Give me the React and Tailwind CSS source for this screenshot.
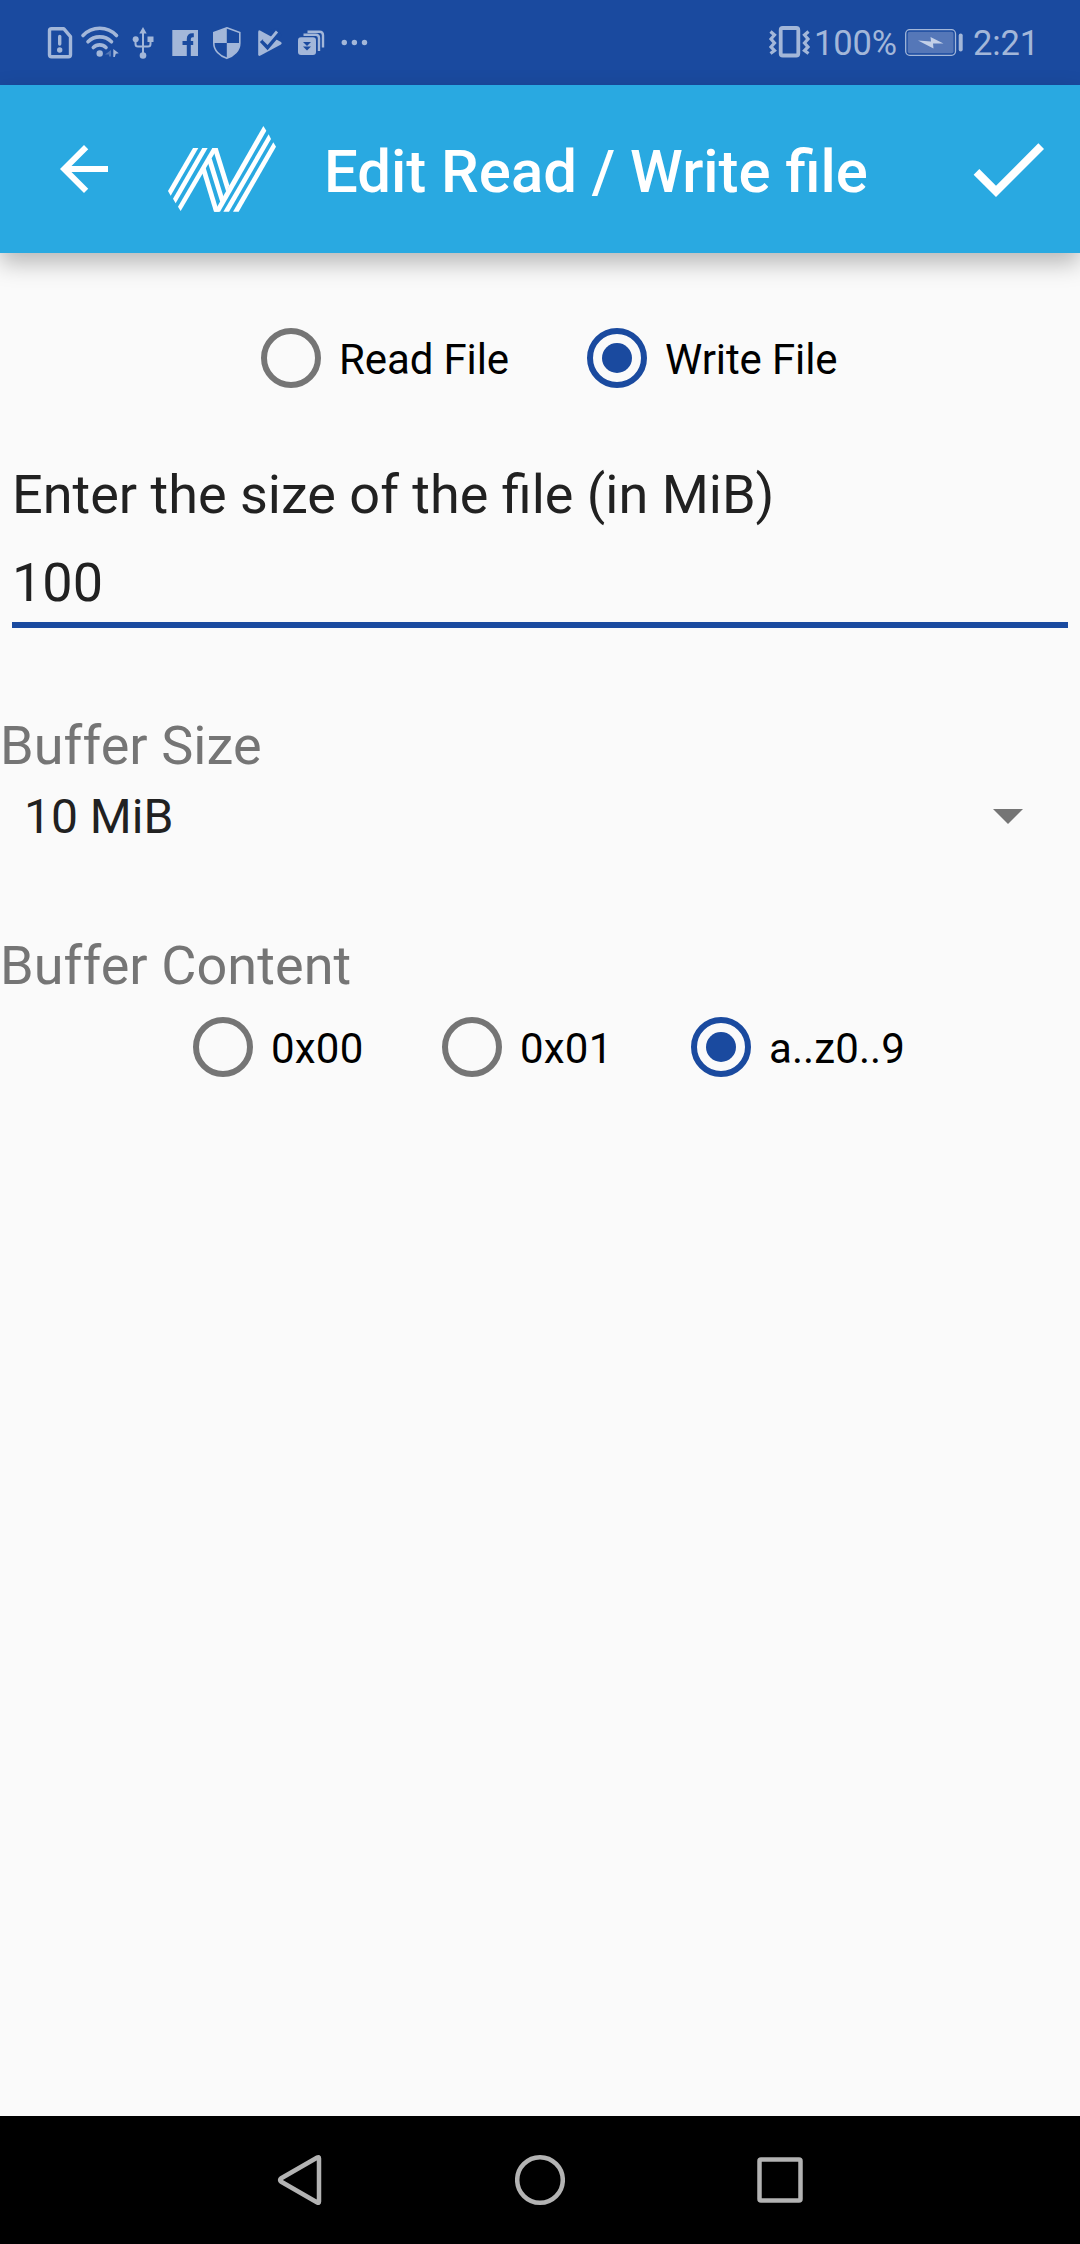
import React from 'react';

function Icon({ box, className = '', children }) {
  const [, , w, h] = box;
  return (
    <svg width={w} height={h} viewBox={box.join(' ')} className={'block shrink-0 ' + className} fill="none">
      {children}
    </svg>
  );
}

function StatusBar() {
  return (
    <div className="flex h-[85px] shrink-0 items-start justify-between bg-[#1a4a9f] pr-[43px] pl-[46px] text-[#a3b7d9]">
      <div className="flex pt-[24px]">
        <Icon box={[46, 24, 28, 38]}>
          <path d="M51.5 28.7h12.2l6.8 8v18q0 2-2 2H51.5q-2 0-2-2V30.7q0-2 2-2z" stroke="currentColor" strokeWidth="3.4" strokeLinejoin="round" />
          <path d="M59.7 36.5v7.500" stroke="currentColor" strokeWidth="3.400" strokeLinecap="round" />
          <circle cx="59.700" cy="50" r="2.700" fill="currentColor" />
        </Icon>
        <Icon box={[80, 24, 40, 38]} className="ml-[6px]">
          <path d="M83 35.500a23 23 0 0 1 33.500 0M88 41.800a16.500 16.500 0 0 1 23.500 0M93.300 47.500a9 9 0 0 1 12.700 0" stroke="currentColor" strokeWidth="3.600" strokeLinecap="round" />
          <circle cx="99.700" cy="53.500" r="3.200" fill="currentColor" />
          <path d="M111 50v6.500h-2v-2h-4z" fill="currentColor" opacity=".4" />
          <path d="M113.300 49l5.500 4.200-3 .6-1 3.200h-1.500z" fill="currentColor" />
        </Icon>
        <Icon box={[130, 24, 27, 38]} className="ml-[10px]">
          <path d="M143 31v25M135.500 39v5q0 2.500 2.500 2.500h10q2.500 0 2.500-2.500v-5" stroke="currentColor" strokeWidth="2" />
          <path d="M143 27l3.700 6.500h-7.400z" fill="currentColor" />
          <circle cx="135.700" cy="39.300" r="3" fill="currentColor" />
          <path d="M147.500 36.500h6v5.500h-6z" fill="currentColor" />
          <circle cx="143" cy="55.500" r="3.300" fill="currentColor" />
        </Icon>
        <Icon box={[170, 24, 30, 38]} className="ml-[13px]">
          <rect x="172.300" y="30" width="25.700" height="26" fill="currentColor" />
          <path d="M188.800 56V39q0-3.700 3.700-3.700h1.300M182.500 43h10.700" stroke="#1a4a9f" strokeWidth="4" />
        </Icon>
        <Icon box={[212, 24, 31, 38]} className="ml-[12px]">
          <path d="M226.800 27.800l13 4.700v10.800c0 7-5.600 12.700-13 15-7.400-2.300-13-8-13-15V32.500z" stroke="currentColor" strokeWidth="1.600" />
          <path d="M226.800 28v15h-13V32.500zM226.800 43h13c0 7.500-5.600 13-13 15z" fill="currentColor" />
        </Icon>
        <Icon box={[256, 24, 28, 38]} className="ml-[13px]">
          <path d="M258.200 32q0-2.500 2.300-1.300l20 11q2.400 1.500 0 3L260.500 55.600q-2.300 1.200-2.300-1.300z" fill="currentColor" />
          <path d="M261.500 40.500l6 6.300 11.500-13.500" stroke="#1a4a9f" strokeWidth="4.500" />
          <path d="M270 30l8-2 4 8-4 3z" fill="#1a4a9f" />
          <path d="M263.500 39l4 4 9.500-11.500" stroke="currentColor" strokeWidth="2.800" />
        </Icon>
        <Icon box={[297, 24, 29, 38]} className="ml-[13px]">
          <path d="M307.500 31.800h12q3.500 0 3.500 3.500v12.200M303.500 34.800h12.200q3.300 0 3.300 3.300v13" stroke="currentColor" strokeWidth="2.400" />
          <rect x="298" y="37.300" width="18" height="17.700" rx="3" fill="currentColor" />
          <path d="M303 42h8l-4 4zM303 46.500h8l-4 4z" fill="#1a4a9f" />
        </Icon>
        <Icon box={[340, 24, 29, 38]} className="ml-[14px]">
          <circle cx="344.300" cy="42.500" r="2.700" fill="currentColor" />
          <circle cx="354.400" cy="42.500" r="2.700" fill="currentColor" />
          <circle cx="364.500" cy="42.500" r="2.700" fill="currentColor" />
        </Icon>
      </div>
      <div className="flex pt-[24px]">
        <Icon box={[767, 24, 43, 38]}>
          <rect x="779.700" y="28" width="17.600" height="27.500" rx="2" stroke="currentColor" strokeWidth="3.800" />
          <path d="M769.500 31.500l4 3.500-3.500 4 3.500 4-3.500 4 3.500 3.500-4 3M807.500 31.500l-4 3.500 3.500 4-3.500 4 3.500 4-3.500 3.500 4 3" stroke="currentColor" strokeWidth="3.200" />
        </Icon>
        <span className="ml-[3px] w-[84px] text-[34.5px] leading-[38px] tracking-[-0.1px]">100%</span>
        <Icon box={[904, 24, 60, 38]} className="ml-[6px]">
          <rect x="905.700" y="29.700" width="49.800" height="25.600" rx="4" stroke="currentColor" strokeWidth="1.300" />
          <rect x="907.700" y="31.800" width="45.800" height="21.500" rx="2" fill="#5577b8" />
          <path d="M918 40.500l13 1-.5-4.500 13 6.500-10.500 0 .5 5z" fill="#c3d0e8" />
          <path d="M960.700 35.500v14" stroke="currentColor" strokeWidth="4" strokeLinecap="round" />
        </Icon>
        <span className="ml-[9px] w-[64px] text-[34.5px] leading-[38px] tracking-[-0.1px]">2:21</span>
      </div>
    </div>
  );
}

function AppBar() {
  return (
    <header className="relative z-10 flex h-[168px] shrink-0 items-center bg-[#29a9e1] text-white shadow-[0_10px_22px_rgba(0,0,0,0.27)]">
      <svg viewBox="0 0 24 24" className="ml-[48px] size-[72px]" fill="currentColor">
        <path d="M20 11H7.830l5.590-5.590L12 4l-8 8 8 8 1.410-1.410L7.830 13H20z" />
      </svg>
      <svg width="112" height="90" viewBox="378 42 336 270" className="ml-[46px] block shrink-0" fill="currentColor">
        <path d="M459 114H475L392 257L384 243Z" />
        <path d="M487 114H503L407 280L399 266Z" />
        <path d="M517 114H533L422 303L414 290Z" />
        <path d="M487 190L496 170L537 305H522Z" />
        <path d="M503 155L515 145L551 262L541 277Z" />
        <path d="M518 114H533L568 226L559 246Z" />
        <path d="M670 48L679 62L540 305H523Z" />
        <path d="M686 73L693 87L567 305H550Z" />
        <path d="M700 97L708 110L596 305H579Z" />
      </svg>
      <h1 className="ml-[46px] flex-1 pt-[5px] text-[59.9px] leading-[72px] font-medium whitespace-nowrap">Edit Read / Write file</h1>
      <svg viewBox="0 0 24 24" className="mr-[24px] size-[96px]" fill="currentColor">
        <path d="M9 16.170L4.830 12l-1.420 1.410L9 19 21 7l-1.410-1.410z" />
      </svg>
    </header>
  );
}

function Radio({ label, checked, className }) {
  return (
    <label className={'flex h-[96px] items-center pl-[18px] ' + className}>
      {checked ? (
        <span className="flex size-[60px] shrink-0 items-center justify-center rounded-full border-[6px] border-[#1a4a9f]">
          <span className="size-[30px] rounded-full bg-[#1a4a9f]" />
        </span>
      ) : (
        <span className="size-[60px] shrink-0 rounded-full border-[6px] border-[#757575]" />
      )}
      <span className="pt-[3px] pl-[18px] text-[42px] leading-[50px] whitespace-nowrap text-black">{label}</span>
    </label>
  );
}

function NavBar() {
  return (
    <nav className="flex h-[128px] shrink-0 items-center justify-center gap-[190px] bg-black text-[#b3b3b3]">
      <Icon box={[275, 2154, 50, 52]}>
        <path d="M317.300 2157.500q1.700-1 1.700 1v43q0 2-1.700 1l-36-20.700q-2.500-1.800 0-3.600z" stroke="currentColor" strokeWidth="4.500" />
      </Icon>
      <Icon box={[515, 2154, 50, 52]}>
        <circle cx="540" cy="2180" r="22.800" stroke="currentColor" strokeWidth="4.500" />
      </Icon>
      <Icon box={[755, 2154, 50, 52]}>
        <rect x="759.500" y="2159.500" width="41" height="41" rx="1.500" stroke="currentColor" strokeWidth="4.500" />
      </Icon>
    </nav>
  );
}

export default function App() {
  return (
    <div className="flex h-[2244px] w-[1080px] flex-col overflow-hidden bg-[#fafafa] font-[Roboto,sans-serif]">
      <StatusBar />
      <AppBar />
      <main className="flex-1 text-[54px] leading-[72px] text-[#212121]">
        <div className="flex pt-[57px] pl-[243px]">
          <Radio label="Read File" className="w-[326px] tracking-[-0.12px]" />
          <Radio label="Write File" checked className="tracking-[-0.12px]" />
        </div>
        <div className="mx-[12px] mt-[53px]">
          <p>Enter the size of the file (in MiB)</p>
          <div className="mt-[16px] h-[81px] border-b-[6px] border-[#1a4a9f]">100</div>
        </div>
        <p className="mt-[82px] tracking-[0.08px] text-[#757575]">Buffer Size</p>
        <div className="mt-[3px] flex h-[64px] items-center justify-between pr-[57px] pl-[24px] text-[48px] leading-[64px]">
          <span>10 MiB</span>
          <svg width="30" height="15" viewBox="0 0 30 15" fill="#757575" className="-mt-[2px]"><path d="M0 0h30L15 15z" /></svg>
        </div>
        <p className="mt-[81px] tracking-[0.08px] text-[#757575]">Buffer Content</p>
        <div className="-mt-[3px] flex pl-[175px]">
          <Radio label="0x00" className="w-[249px] tracking-[0.2px]" />
          <Radio label="0x01" className="w-[249px] tracking-[0.2px]" />
          <Radio label="a..z0..9" checked className="tracking-[0.1px]" />
        </div>
      </main>
      <NavBar />
    </div>
  );
}
